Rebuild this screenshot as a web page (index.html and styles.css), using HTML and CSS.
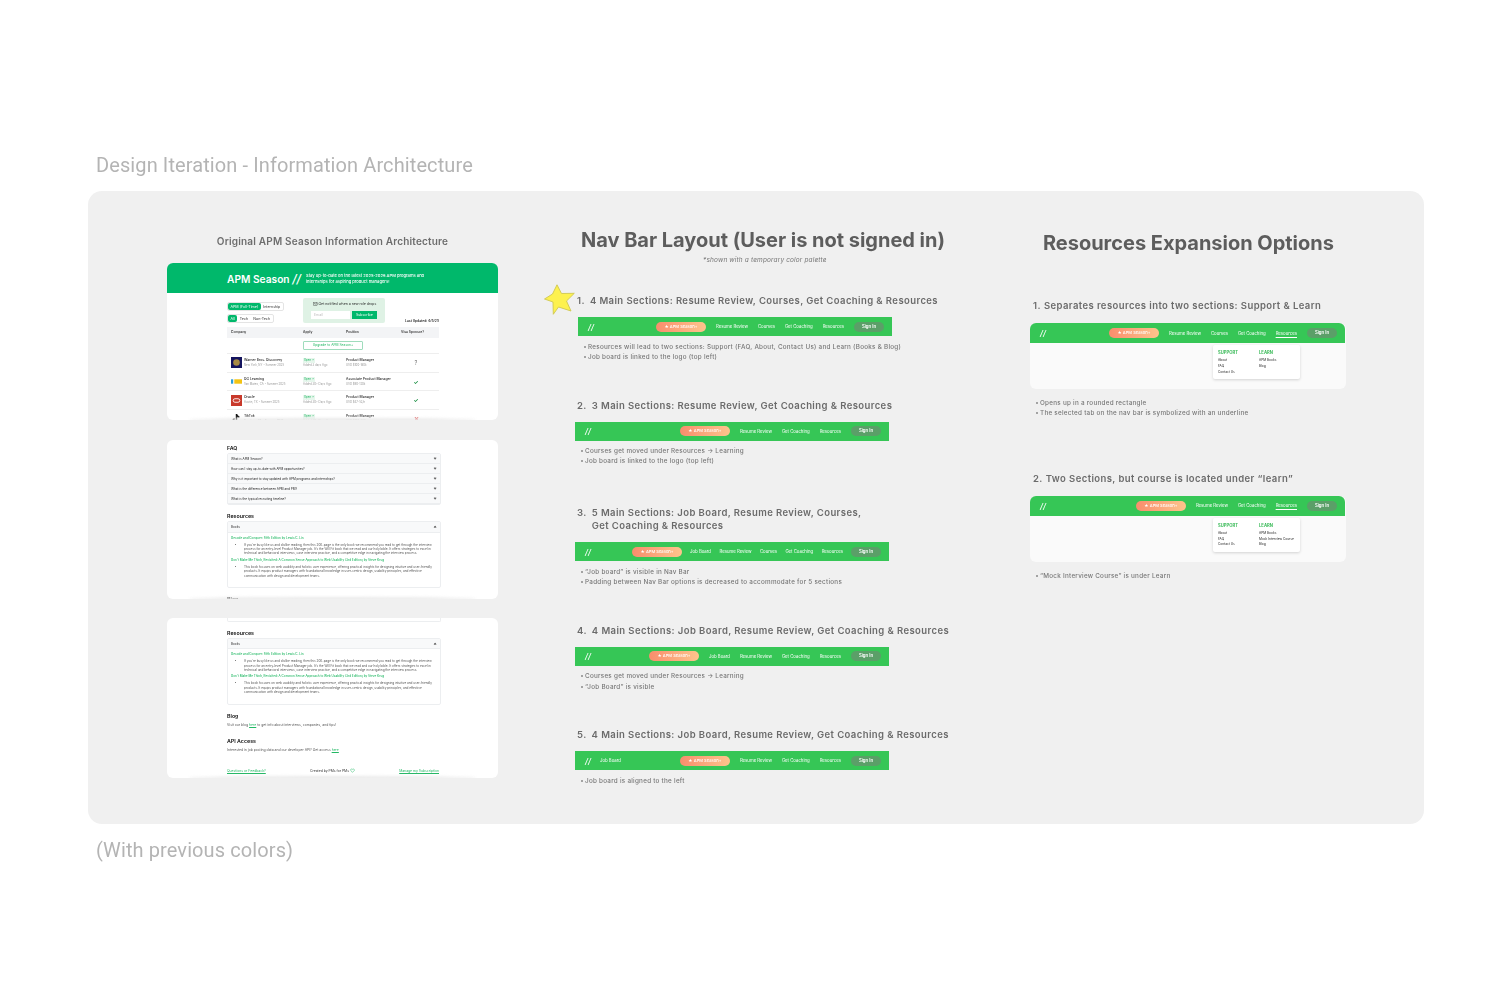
FILE: index.html
```html
<!DOCTYPE html>
<html lang="en">
<head>
<meta charset="utf-8">
<title>Design Iteration - Information Architecture</title>
<link rel="stylesheet" href="styles.css">
</head>
<body>
<main class="page">
  <h1 class="board-title">Design Iteration - Information Architecture</h1>
  <section class="panel">
    <div class="col col-left">
      <h2 class="left-title">Original APM Season Information Architecture</h2>
      <article class="card card-one">
        <header class="hero">
          <div class="hero-logo">APM Season <i>//</i></div>
          <p class="hero-sub">Stay up-to-date on the latest 2025-2026 APM programs and<br>internships for aspiring product managers!</p>
        </header>
        <div class="sheet">
          <div class="controls">
            <div class="tab-stack">
              <div class="tabs"><span class="tab on">APM (Full-Time)</span><span class="tab">Internship</span></div>
              <div class="tabs"><span class="tab on">All</span><span class="tab">Tech</span><span class="tab">Non-Tech</span></div>
            </div>
            <div class="notify">
              <div class="notify-text"><svg class="mail" viewBox="0 0 10 8"><rect x=".6" y=".6" width="8.800" height="6.800" rx="1" fill="none" stroke="#222" stroke-width="1"/><path d="M1 1.500 5 4.500 9 1.500" fill="none" stroke="#222" stroke-width=".9"/></svg> Get notified when a new role drops</div>
              <div class="notify-form"><span class="email">Email</span><span class="subscribe">Subscribe</span></div>
            </div>
            <div class="updated">Last Updated: 4/5/25</div>
          </div>
          <div class="row-grid thead"><span>Company</span><span>Apply</span><span>Position</span><span>Visa Sponsor?</span></div>
          <div class="upgrade-row"><span class="upgrade">Upgrade to APM Season+</span></div>
          <div class="row-grid trow">
            <div class="co"><svg class="logo" viewBox="0 0 10 10"><rect width="10" height="10" fill="#14145e"/><circle cx="5" cy="5" r="3" fill="#a78a45"/></svg><div><b>Warner Bros. Discovery</b><small>New York, NY • Summer 2025</small></div></div>
            <div><em class="open">Open ↗</em><small>Added 3 days Ago</small></div>
            <div><b>Product Manager</b><small>USD $100-180k</small></div>
            <div class="visa q">?</div>
          </div>
          <div class="row-grid trow">
            <div class="co"><svg class="logo" viewBox="0 0 10 10"><rect width="10" height="10" fill="#fff"/><rect y="3" width="2" height="4" fill="#2b9fd8"/><rect x="3" y="3" width="7" height="4" fill="#f3c313"/></svg><div><b>DG Learning</b><small>San Mateo, CA • Summer 2025</small></div></div>
            <div><em class="open">Open ↗</em><small>Added 30+ Days Ago</small></div>
            <div><b>Associate Product Manager</b><small>USD $90-120k</small></div>
            <div class="visa yes">✓</div>
          </div>
          <div class="row-grid trow">
            <div class="co"><svg class="logo" viewBox="0 0 10 10"><rect width="10" height="10" fill="#c8392b"/><rect x="2" y="3.400" width="6" height="3.200" rx="1.600" fill="none" stroke="#fff" stroke-width=".8"/></svg><div><b>Oracle</b><small>Austin, TX • Summer 2025</small></div></div>
            <div><em class="open">Open ↗</em><small>Added 30+ Days Ago</small></div>
            <div><b>Product Manager</b><small>USD $47-52/h</small></div>
            <div class="visa yes">✓</div>
          </div>
          <div class="row-grid trow">
            <div class="co"><svg class="logo" viewBox="0 0 10 10"><path d="M5 1v6a1.600 1.600 0 1 1-1.600-1.600M5 1c.3 1.500 1.200 2.400 2.600 2.600" fill="none" stroke="#111" stroke-width="1.300"/></svg><div><b>TikTok</b><small>San Jose, CA • Summer 2025</small></div></div>
            <div><em class="open">Open ↗</em><small>Added 30+ Days Ago</small></div>
            <div><b>Product Manager</b><small>USD $100-150k</small></div>
            <div class="visa no">✕</div>
          </div>
        </div>
      </article>
      <article class="card card-two">
        <div class="sheet">
          <h3 class="mini-h faq-h">FAQ</h3>
          <div class="accordion">
            <div class="acc-row"><span>What is APM Season?</span><i class="chev"></i></div>
            <div class="acc-row"><span>How can I stay up-to-date with APM opportunities?</span><i class="chev"></i></div>
            <div class="acc-row"><span>Why is it important to stay updated with APM programs and internships?</span><i class="chev"></i></div>
            <div class="acc-row"><span>What is the difference between APM and PM?</span><i class="chev"></i></div>
            <div class="acc-row"><span>What is the typical recruiting timeline?</span><i class="chev"></i></div>
          </div>
          <h3 class="mini-h gap-h">Resources</h3>
          <div class="accordion">
            <div class="acc-row"><span>Books</span><i class="chev up"></i></div>
            <div class="acc-body">
              <a class="book">Decode and Conquer: Fifth Edition by Lewis C. Lin</a>
              <ul class="book-notes"><li>If you're busy like us and dislike reading, then this 200-page is the only book we recommend you read to get through the interview<br>process for an entry-level Product Manager job. It's the Will Fit book that we read and our holy bible. It offers strategies to excel in<br>technical and behavioral interviews, case interview practice, and a competitive edge in navigating the interview process.</li></ul>
              <a class="book">Don't Make Me Think, Revisited: A Common Sense Approach to Web Usability (3rd Edition) by Steve Krug</a>
              <ul class="book-notes"><li>This book focuses on web usability and holistic user experience, offering practical insights for designing intuitive and user-friendly<br>products. It equips product managers with foundational knowledge in user-centric design, usability principles, and effective<br>communication with design and development teams.</li></ul>
            </div>
          </div>
          <h3 class="mini-h blog-h">Blog</h3>
        </div>
      </article>
      <article class="card card-three">
        <div class="sheet">
          <div class="acc-stub"></div>
          <h3 class="mini-h res-h">Resources</h3>
          <div class="accordion">
            <div class="acc-row"><span>Books</span><i class="chev up"></i></div>
            <div class="acc-body">
              <a class="book">Decode and Conquer: Fifth Edition by Lewis C. Lin</a>
              <ul class="book-notes"><li>If you're busy like us and dislike reading, then this 200-page is the only book we recommend you read to get through the interview<br>process for an entry-level Product Manager job. It's the Will Fit book that we read and our holy bible. It offers strategies to excel in<br>technical and behavioral interviews, case interview practice, and a competitive edge in navigating the interview process.</li></ul>
              <a class="book">Don't Make Me Think, Revisited: A Common Sense Approach to Web Usability (3rd Edition) by Steve Krug</a>
              <ul class="book-notes"><li>This book focuses on web usability and holistic user experience, offering practical insights for designing intuitive and user-friendly<br>products. It equips product managers with foundational knowledge in user-centric design, usability principles, and effective<br>communication with design and development teams.</li></ul>
            </div>
          </div>
          <h3 class="mini-h blog-two">Blog</h3>
          <p class="mini-p">Visit our blog <a>here</a> to get info about interviews, companies, and tips!</p>
          <h3 class="mini-h api-h">API Access</h3>
          <p class="mini-p">Interested in job posting data and our developer API? Get access <a>here</a></p>
          <div class="mini-foot"><a>Questions or Feedback?</a><span>Created by PMs for PMs <svg class="heart" viewBox="0 0 10 10"><path d="M5 8.600 1.400 5A2.200 2.200 0 0 1 5 2.600 2.200 2.200 0 0 1 8.600 5Z" fill="none" stroke="#22b864" stroke-width="1"/></svg></span><a>Manage my Subscription</a></div>
        </div>
      </article>
    </div>

    <div class="col col-mid">
      <h2 class="col-title">Nav Bar Layout (User is not signed in)</h2>
      <p class="palette-note">*shown with a temporary color palette</p>

      <div class="opt opt-m1">
        <svg class="star" viewBox="0 0 32 32"><path d="M13 .8 17.500 9.500 30.300 9.300 22.500 17 27 27 14.500 23 9.300 30.300 9 18 .5 15 8.500 10Z" fill="#fdf14f" stroke="#cfc750" stroke-width=".9" stroke-linejoin="round"/></svg>
        <h3 class="opt-h"><span class="num">1.</span><span>4 Main Sections: Resume Review, Courses, Get Coaching &amp; Resources</span></h3>
        <nav class="nav nudge">
          <span class="slashes">//</span>
          <span class="pill">★ APM Season+</span>
          <span class="links"><a>Resume Review</a><a>Courses</a><a>Get Coaching</a><a>Resources</a></span>
          <span class="signin">Sign In</span>
        </nav>
        <ul class="notes nudge"><li>Resources will lead to two sections: Support (FAQ, About, Contact Us) and Learn (Books &amp; Blog)</li><li>Job board is linked to the logo (top left)</li></ul>
      </div>

      <div class="opt opt-m2">
        <h3 class="opt-h"><span class="num">2.</span><span>3 Main Sections: Resume Review, Get Coaching &amp; Resources</span></h3>
        <nav class="nav">
          <span class="slashes">//</span>
          <span class="pill">★ APM Season+</span>
          <span class="links"><a>Resume Review</a><a>Get Coaching</a><a>Resources</a></span>
          <span class="signin">Sign In</span>
        </nav>
        <ul class="notes"><li>Courses get moved under Resources → Learning</li><li>Job board is linked to the logo (top left)</li></ul>
      </div>

      <div class="opt opt-m3">
        <h3 class="opt-h"><span class="num">3.</span><span>5 Main Sections: Job Board, Resume Review, Courses,<br>Get Coaching &amp; Resources</span></h3>
        <nav class="nav">
          <span class="slashes">//</span>
          <span class="pill">★ APM Season+</span>
          <span class="links tight"><a>Job Board</a><a>Resume Review</a><a>Courses</a><a>Get Coaching</a><a>Resources</a></span>
          <span class="signin">Sign In</span>
        </nav>
        <ul class="notes"><li>“Job board” is visible in Nav Bar</li><li>Padding between Nav Bar options is decreased to accommodate for 5 sections</li></ul>
      </div>

      <div class="opt opt-m4">
        <h3 class="opt-h"><span class="num">4.</span><span>4 Main Sections: Job Board, Resume Review, Get Coaching &amp; Resources</span></h3>
        <nav class="nav">
          <span class="slashes">//</span>
          <span class="pill">★ APM Season+</span>
          <span class="links"><a>Job Board</a><a>Resume Review</a><a>Get Coaching</a><a>Resources</a></span>
          <span class="signin">Sign In</span>
        </nav>
        <ul class="notes"><li>Courses get moved under Resources → Learning</li><li>“Job Board” is visible</li></ul>
      </div>

      <div class="opt opt-m5">
        <h3 class="opt-h"><span class="num">5.</span><span>4 Main Sections: Job Board, Resume Review, Get Coaching &amp; Resources</span></h3>
        <nav class="nav">
          <span class="slashes">//</span>
          <a class="left-link">Job Board</a>
          <span class="pill">★ APM Season+</span>
          <span class="links"><a>Resume Review</a><a>Get Coaching</a><a>Resources</a></span>
          <span class="signin">Sign In</span>
        </nav>
        <ul class="notes"><li>Job board is aligned to the left</li></ul>
      </div>
    </div>

    <div class="col col-right">
      <h2 class="col-title right-title">Resources Expansion Options</h2>

      <div class="opt opt-r1">
        <h3 class="opt-h"><span class="num">1.</span><span>Separates resources into two sections: Support &amp; Learn</span></h3>
        <div class="mock">
          <nav class="nav">
            <span class="slashes">//</span>
            <span class="pill">★ APM Season+</span>
            <span class="links"><a>Resume Review</a><a>Courses</a><a>Get Coaching</a><a class="current">Resources</a></span>
            <span class="signin">Sign In</span>
          </nav>
          <div class="mock-body">
            <div class="menu">
              <div class="menu-col"><strong>SUPPORT</strong><a>About</a><a>FAQ</a><a>Contact Us</a></div>
              <div class="menu-col"><strong>LEARN</strong><a>APM Books</a><a>Blog</a></div>
            </div>
          </div>
        </div>
        <ul class="notes"><li>Opens up in a rounded rectangle</li><li>The selected tab on the nav bar is symbolized with an underline</li></ul>
      </div>

      <div class="opt opt-r2">
        <h3 class="opt-h"><span class="num">2.</span><span>Two Sections, but course is located under “learn”</span></h3>
        <div class="mock">
          <nav class="nav">
            <span class="slashes">//</span>
            <span class="pill">★ APM Season+</span>
            <span class="links"><a>Resume Review</a><a>Get Coaching</a><a class="current">Resources</a></span>
            <span class="signin">Sign In</span>
          </nav>
          <div class="mock-body">
            <div class="menu">
              <div class="menu-col"><strong>SUPPORT</strong><a>About</a><a>FAQ</a><a>Contact Us</a></div>
              <div class="menu-col"><strong>LEARN</strong><a>APM Books</a><a>Mock Interview Course</a><a>Blog</a></div>
            </div>
          </div>
        </div>
        <ul class="notes"><li>“Mock Interview Course” is under Learn</li></ul>
      </div>
    </div>
  </section>
  <p class="board-caption">(With previous colors)</p>
</main>
</body>
</html>
```

FILE: styles.css
```css
* { box-sizing: border-box; }
html, body { margin: 0; padding: 0; }
body { background: #fff; font-family: Inter, "Liberation Sans", sans-serif; overflow: hidden; }
h1, h2, h3, p, ul { margin: 0; padding: 0; }
ul { list-style: none; }

.page { width: 1512px; height: 982px; padding: 153px 88px 0; }
.board-title, .board-caption { font-family: Roboto, Inter, sans-serif; font-weight: 400; font-size: 20px; line-height: 24px; color: #b4b4b4; padding-left: 8px; letter-spacing: .1px; filter: blur(.2px); }
.board-title { height: 38px; }
.board-caption { margin-top: 14px; }

.panel { width: 1336px; height: 633px; border-radius: 14px; background: #f0f0f0; padding-left: 79px; display: grid; grid-template-columns: 408px 455px 316px; }
.col { min-width: 0; }

/* left column */
.left-title { font-size: 10px; line-height: 14px; font-weight: 600; color: #6d6d6d; text-align: center; margin-top: 43px; letter-spacing: .2px; width: 331px; filter: blur(.2px); }
.col-left { width: 331px; }
.card { width: 331px; background: #fff; border-radius: 6px; overflow: hidden; position: relative; color: #1a1a1a; }
.card::after { content: ""; position: absolute; left: 22px; right: 22px; bottom: -2px; height: 4px; background: #eaeaea; border-radius: 50%; filter: blur(1.500px); }
.card-one { height: 157px; margin-top: 15px; }
.card-two { height: 159px; margin-top: 20px; }
.card-three { height: 160px; margin-top: 19px; }
.sheet { width: 212px; margin-left: 60px; filter: blur(.25px); }

.hero { height: 30px; background: #00b86b; display: flex; align-items: center; padding-left: 60px; color: #fff; }
.hero-logo { font-size: 10.200px; font-weight: 600; width: 79px; flex: none; white-space: nowrap; }
.hero-logo i { font-size: 12px; font-weight: 500; }
.hero-sub { font-size: 4.100px; line-height: 5.700px; font-weight: 500; filter: blur(.2px); margin-top: 1px; }

.controls { height: 34px; position: relative; display: flex; padding-top: 5px; }
.tab-stack { width: 76px; padding-top: 4px; }
.tabs { display: flex; width: fit-content; height: 9px; border: .5px solid #e4e4e4; border-radius: 2px; margin-bottom: 3px; }
.tab { font-size: 3.650px; line-height: 8px; padding: 0 2.500px; color: #333; white-space: nowrap; }
.tab.on { background: #00b86b; color: #fff; border-radius: 2px; }
.notify { width: 82px; height: 25px; background: #dff2e5; border-radius: 2px; padding: 4px 8px 0; flex: none; }
.notify-text { font-size: 3.500px; line-height: 5px; color: #222; white-space: nowrap; padding-left: 2px; }
.mail { width: 4.500px; height: 3.600px; vertical-align: -.5px; }
.notify-form { display: flex; gap: 2px; margin-top: 4px; }
.email { width: 40px; height: 8px; background: #fff; font-size: 3.500px; line-height: 8px; color: #bbb; padding-left: 3px; }
.subscribe { width: 26px; height: 8px; background: #00b86b; font-size: 3.500px; line-height: 8px; color: #fff; text-align: center; }
.updated { position: absolute; right: 0; top: 25.500px; font-size: 3.300px; line-height: 5px; font-weight: 600; color: #222; white-space: nowrap; }

.row-grid { display: grid; grid-template-columns: 72px 43px 55px 38px; padding-left: 4px; }
.thead { height: 11px; background: #f3f4f6; font-size: 3.300px; line-height: 11px; font-weight: 600; color: #333; }
.upgrade-row { height: 15px; display: flex; justify-content: center; align-items: center; }
.upgrade { width: 60px; height: 9px; border: .7px solid #9fdcbc; border-radius: 1px; text-align: center; font-size: 3.300px; line-height: 7.600px; color: #22b864; }
.trow { height: 18.700px; border-top: .5px solid #eee; font-size: 3.400px; align-items: center; }
.trow b { display: block; font-weight: 500; line-height: 5px; color: #222; white-space: nowrap; }
.trow small { display: block; font-size: 2.800px; line-height: 5px; color: #999; white-space: nowrap; }
.co { display: flex; gap: 2px; align-items: center; }
.logo { width: 11px; height: 11px; flex: none; }
.open { display: block; width: 12px; font-style: normal; font-size: 2.800px; line-height: 5px; color: #22b864; background: #e6f6ec; text-align: center; white-space: nowrap; }
.visa { text-align: center; font-size: 5.500px; line-height: 6px; padding-right: 8px; }
.yes { color: #0f8a3a; font-weight: 700; }
.no { color: #e14b4b; font-weight: 700; }
.q { color: #777; }

.mini-h { font-size: 5.300px; line-height: 7px; font-weight: 600; color: #111; }
.faq-h { margin-top: 5px; }
.gap-h { margin-top: 8px; }
.blog-h { margin-top: 8px; }
.accordion { margin-top: 1px; border: .5px solid #eceef0; border-radius: 2px; width: 214px; }
.acc-row { height: 10.100px; background: #f8f9fa; border-bottom: .5px solid #eceef0; display: flex; justify-content: space-between; align-items: center; padding: 0 4px 0 3px; font-size: 3.050px; color: #222; white-space: nowrap; }
.chev { width: 2.200px; height: 2.200px; border-right: .35px solid #666; border-bottom: .35px solid #666; transform: rotate(45deg); margin-top: -1px; }
.chev.up { transform: rotate(225deg); margin-top: 1px; }
.acc-body { height: 54.500px; padding: 3px 3px 0; }
.book { display: block; font-size: 3.050px; font-weight: 500; line-height: 5px; color: #22b864; white-space: nowrap; }
.book-notes { list-style: disc; padding-left: 13px; margin: 2px 0 2px; font-size: 3.050px; line-height: 4.400px; color: #555; white-space: nowrap; }
.book-notes li { margin: 0; }

.acc-stub { height: 4px; width: 214px; border: .5px solid #eceef0; border-top: 0; border-radius: 0 0 2px 2px; }
.res-h { margin-top: 8px; }
.blog-two { margin-top: 8px; }
.api-h { margin-top: 9.500px; }
.mini-p { font-size: 3.400px; line-height: 6px; color: #555; margin-top: 2.500px; }
.mini-p a, .mini-foot a { color: #22b864; text-decoration: underline; }
.mini-foot { margin-top: 14.500px; display: flex; justify-content: space-between; font-size: 3.400px; line-height: 6px; align-items: center; color: #333; }
.heart { width: 5px; height: 5px; vertical-align: -1px; }

/* headings */
.col-title { font-size: 20px; line-height: 26px; font-weight: 700; color: #5d5d5d; letter-spacing: -.02px; white-space: nowrap; filter: blur(.2px); }
.col-mid .col-title { margin-top: 36px; padding-left: 6px; }
.right-title { margin-top: 39px; padding-left: 13px; }
.palette-note { font-size: 6.500px; line-height: 10px; font-style: italic; color: #777; margin-top: 2px; padding-left: 128px; letter-spacing: .15px; filter: blur(.15px); }

/* options */
.opt { position: relative; width: 316px; }
.opt-h { display: flex; gap: 4px; font-size: 9.500px; line-height: 13px; font-weight: 600; color: #6b6b6b; letter-spacing: .41px; white-space: nowrap; padding-left: 2px; filter: blur(.2px); }
.num { flex: none; padding-right: 1px; }
.opt-m1 { margin-top: 29px; }
.opt-m2 { margin-top: 36.500px; }
.opt-m3 { margin-top: 39.500px; }
.opt-m4 { margin-top: 36px; }
.opt-m5 { margin-top: 36.500px; }
.opt-m3 .notes { margin-top: 6px; }
.opt-r1 { margin-top: 43px; }
.opt-r2 { margin-top: 53px; }
.opt-r1 .opt-h, .opt-r2 .opt-h { gap: 2px; padding-left: 3px; }
.star { position: absolute; left: -31px; top: -10px; width: 32px; height: 32px; }

/* nav */
.nav { width: 314px; height: 19px; margin-top: 10px; background: #36c656; display: flex; align-items: center; padding: 0 8px 0 10px; color: #fff; font-size: 4.300px; filter: blur(.2px); }
.nudge { margin-left: 3px; }
.slashes { font-size: 8px; font-style: italic; font-weight: 500; width: 15px; flex: none; }
.pill { margin-left: auto; width: 50px; height: 10px; border-radius: 5px; background: linear-gradient(90deg, #f98d6d, #fdc48c); text-align: center; font-size: 4.100px; line-height: 10px; font-weight: 500; white-space: nowrap; }
.links { display: flex; gap: 10px; margin: 0 10px; white-space: nowrap; }
.links.tight { gap: 8.500px; margin: 0 8px; }
.left-link { margin-left: 0; }
.signin { width: 30px; height: 10px; border-radius: 5px; background: #5b9f68; text-align: center; line-height: 10px; font-weight: 600; }
.current { text-decoration: underline; text-underline-offset: 1.500px; text-decoration-thickness: .5px; }

.notes { margin-top: 5.500px; padding-left: 9px; font-size: 6.300px; line-height: 10.300px; font-weight: 500; color: #777; letter-spacing: .27px; white-space: nowrap; filter: blur(.15px); }
.notes li { position: relative; padding-left: 1px; }
.notes li::before { content: ""; position: absolute; left: -3.500px; top: 4px; width: 2px; height: 2px; border-radius: 50%; background: #8a8a8a; }

/* mock */
.mock { width: 316px; margin-top: 11px; background: #fafafa; border-radius: 6px; height: 66px; }
.mock .nav { width: 315px; height: 20px; margin-top: 0; border-radius: 6px 6px 0 0; }
.mock-body { position: relative; height: 46px; }
.menu { position: absolute; left: 183px; top: 2px; width: 87px; height: 34px; background: #fff; border-radius: 2px; box-shadow: 0 1px 3px rgba(0,0,0,.16); display: flex; padding: 5px 5px; filter: blur(.15px); }
.menu-col { width: 41px; flex: none; font-size: 3.200px; line-height: 5.900px; color: #222; white-space: nowrap; }
.menu-col strong { display: block; color: #3cbb5a; font-size: 4.200px; font-weight: 700; line-height: 6px; margin-bottom: 2px; }
.menu-col a { display: block; }
.opt-r1 .notes, .opt-r2 .notes { margin-top: 9px; padding-left: 9px; }
```
